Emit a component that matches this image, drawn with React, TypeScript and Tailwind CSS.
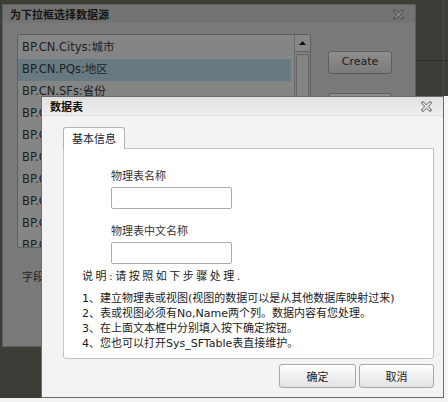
import React from "react";

function XIcon({ dim }: { dim?: boolean }) {
  const outer = dim ? "#595959" : "#8c8c8c";
  const inner = dim ? "#8a8a8a" : "#f2f2f2";
  return (
    <svg width="11" height="11" viewBox="0 0 11 11">
      <path d="M2 2 L9 9 M9 2 L2 9" stroke={outer} strokeWidth="3.4" strokeLinecap="square" fill="none" />
      <path d="M2 2 L9 9 M9 2 L2 9" stroke={inner} strokeWidth="1.3" strokeLinecap="butt" fill="none" />
    </svg>
  );
}

const items = [
  "BP.CN.Citys:城市",
  "BP.CN.PQs:地区",
  "BP.CN.SFs:省份",
  "BP.CN.Dept:部门",
  "BP.CN.Area:区域",
  "BP.CN.Town:乡镇",
  "BP.CN.Xian:县",
  "BP.CN.Sex:性别",
  "BP.CN.Edu:学历",
  "BP.CN.Nation:民族",
];

const steps = [
  "1、建立物理表或视图(视图的数据可以是从其他数据库映射过来)",
  "2、表或视图必须有No,Name两个列。数据内容有您处理。",
  "3、在上面文本框中分别填入按下确定按钮。",
  "4、您也可以打开Sys_SFTable表直接维护。",
];

export default function App() {
  return (
    <div className="w-[448px] h-[402px] overflow-hidden flex flex-col bg-[#f3f3f3] font-['DejaVu_Sans','Noto_Sans_CJK_SC',sans-serif]">
      <div className="relative h-[398px] bg-[#3d3d38]">
        <div className="absolute left-[416px] top-[60px] w-[32px] h-px bg-[#2b2b27]" />
        <div className="absolute left-[443px] top-0 w-px h-[97px] bg-[#4a4a44]" />

        {/* outer dialog (dimmed) */}
        <div className="ml-[2px] mt-[4px] w-[414px] h-[343px] bg-[#7a7a7a] border border-[#5e5e5e] flex flex-col">
          <div className="h-[18px] shrink-0 flex items-center justify-between pl-[7px] pr-[11px] bg-[#737373]">
            <span className="text-[11px] leading-none font-bold text-[#161616] font-['Noto_Sans_CJK_SC',sans-serif]">为下拉框选择数据源</span>
            <XIcon dim />
          </div>
          <div className="flex pl-[14px] pt-[11px]">
            <div className="w-[294px] h-[214px] border border-[#5f5f5f] rounded-[2px] bg-[#858585] flex overflow-hidden">
              <div className="flex-1 flex flex-col pt-[2px] pr-[3px]">
                {items.map((t, i) => (
                  <div
                    key={t}
                    className={`h-[22px] shrink-0 flex items-center pl-[4px] text-[11.5px] whitespace-nowrap text-[#1e1e1e] ${i === 1 ? "bg-[#687a81]" : ""}`}
                  >
                    {t}
                  </div>
                ))}
              </div>
              <div className="w-[16px] shrink-0 flex flex-col bg-[#7e7e7e] border-l border-[#6a6a6a]">
                <div className="h-[17px] flex items-center justify-center border-b border-[#666] bg-[#878787]">
                  <svg width="7" height="4" viewBox="0 0 7 4">
                    <path d="M0 4 L3.5 0 L7 4 Z" fill="#111" />
                  </svg>
                </div>
                <div className="mt-[2px] mx-[1px] h-[120px] rounded-[2px] border border-[#666] bg-[#838383]" />
              </div>
            </div>
            <div className="ml-[17px] mt-[17px] flex flex-col gap-[19px]">
              <div className="w-[64px] h-[23px] rounded-[3px] border border-[#5d5d5d] bg-gradient-to-b from-[#8f8f8f] to-[#7a7a7a] flex items-center justify-center text-[11px] text-[#1c1c1c]">
                Create
              </div>
              <div className="w-[64px] h-[23px] rounded-[3px] border border-[#5d5d5d] bg-gradient-to-b from-[#8f8f8f] to-[#7a7a7a]" />
            </div>
          </div>
          <div className="pl-[19px] mt-[20px] text-[11px] text-[#1e1e1e] font-['Noto_Sans_CJK_SC',sans-serif]">字段</div>
        </div>

        {/* inner modal dialog */}
        <div className="absolute left-[41px] top-[96px] w-[407px] h-[302px] bg-[#f5f5f5]">
          <div className="w-[403px] h-full border border-[#6b6b6b] bg-[#f3f3f3] flex flex-col">
            <div className="h-[19px] shrink-0 flex items-center justify-between pl-[8px] pr-[11px] bg-gradient-to-b from-[#e0e0e0] to-[#eeeeee] border-b border-[#dcdcdc]">
              <span className="text-[11px] leading-none font-bold text-[#111] font-['Noto_Sans_CJK_SC',sans-serif]">数据表</span>
              <XIcon />
            </div>
            <div className="flex-1 flex flex-col pl-[21px] pr-[9px] pt-[11px] font-['Noto_Sans_CJK_SC',sans-serif]">
              <div className="flex">
                <div className="relative z-10 -mb-px w-[62px] h-[22px] bg-white border border-b-0 border-[#b4b4b4] rounded-t-[3px] flex items-center justify-center text-[11px] text-[#222]">
                  基本信息
                </div>
              </div>
              <div className="h-[211px] bg-white border border-[#c4c4c4] rounded-b-[3px] flex flex-col">
                <div className="pl-[47px] pt-[18px] flex flex-col">
                  <div className="text-[11px] leading-[16px] text-[#333]">物理表名称</div>
                  <div className="mt-[4px] w-[121px] h-[22px] bg-white border border-[#ababab] rounded-[2px]" />
                  <div className="mt-[13px] text-[11px] leading-[16px] text-[#333]">物理表中文名称</div>
                  <div className="mt-[4px] w-[121px] h-[22px] bg-white border border-[#ababab] rounded-[2px]" />
                </div>
                <div className="pl-[18px] mt-[5px] flex flex-col text-[11px] leading-[15px] text-[#222] font-['DejaVu_Sans','Noto_Sans_CJK_SC',sans-serif]">
                  <div className="tracking-[2.5px]">说明:请按照如下步骤处理.</div>
                  <div className="mt-[7px] flex flex-col whitespace-nowrap">
                    {steps.map((s) => (
                      <div key={s}>{s}</div>
                    ))}
                  </div>
                </div>
              </div>
              <div className="mt-[5px] flex justify-end gap-[3px]">
                <div className="w-[77px] h-[24px] rounded-[3px] border border-[#a7a7a7] bg-gradient-to-b from-white to-[#e3e3e3] flex items-center justify-center text-[11px] text-[#222]">
                  确定
                </div>
                <div className="w-[75px] h-[24px] rounded-[3px] border border-[#a7a7a7] bg-gradient-to-b from-white to-[#e3e3e3] flex items-center justify-center text-[11px] text-[#222]">
                  取消
                </div>
              </div>
            </div>
          </div>
        </div>
      </div>
      <div className="h-[4px] bg-[#f3f3f3]" />
    </div>
  );
}
